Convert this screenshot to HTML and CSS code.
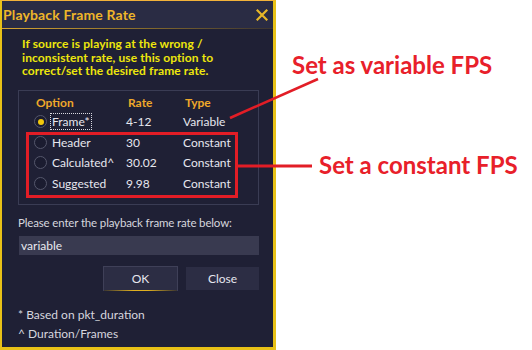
FILE: index.html
```html
<!DOCTYPE html>
<html>
<head>
<meta charset="utf-8">
<link rel="stylesheet" href="styles.css">
</head>
<body>
<div class="page">
  <div class="dialog">
    <div class="titlebar">
      <span class="title">Playback Frame Rate</span>
      <svg class="close" width="12" height="12" viewBox="0 0 12 12"><path d="M1.5 1.5 L10.5 10.5 M10.5 1.5 L1.5 10.5" stroke="#e8b828" stroke-width="2.2" stroke-linecap="square"/></svg>
    </div>
    <div class="content">
      <p class="intro">If source is playing at the wrong /<br>inconsistent rate, use this option to<br>correct/set the desired frame rate.</p>
      <div class="group">
        <div class="row head">
          <span class="c-opt">Option</span><span class="c-rate">Rate</span><span class="c-type">Type</span>
        </div>
        <div class="row">
          <span class="c-opt"><span class="radio on"></span><span class="focus">Frame*</span></span><span class="c-rate">4-12</span><span class="c-type">Variable</span>
        </div>
        <div class="row">
          <span class="c-opt"><span class="radio"></span><span>Header</span></span><span class="c-rate">30</span><span class="c-type">Constant</span>
        </div>
        <div class="row">
          <span class="c-opt"><span class="radio"></span><span>Calculated^</span></span><span class="c-rate">30.02</span><span class="c-type">Constant</span>
        </div>
        <div class="row">
          <span class="c-opt"><span class="radio"></span><span>Suggested</span></span><span class="c-rate">9.98</span><span class="c-type">Constant</span>
        </div>
      </div>
      <div class="prompt">Please enter the playback frame rate below:</div>
      <div class="input">variable</div>
      <div class="buttons">
        <div class="btn ok">OK</div>
        <div class="btn">Close</div>
      </div>
      <div class="note">* Based on pkt_duration</div>
      <div class="note">^ Duration/Frames</div>
    </div>
  </div>
  <svg class="marks" width="532" height="350" viewBox="0 0 532 350">
    <rect x="27.5" y="133.5" width="209" height="63" fill="none" stroke="#e21d26" stroke-width="3"/>
    <line x1="238" y1="166" x2="312" y2="166" stroke="#e21d26" stroke-width="3"/>
    <line x1="230" y1="118" x2="318" y2="79" stroke="#e21d26" stroke-width="2.5"/>
  </svg>
  <div class="callout c1">Set as variable FPS</div>
  <div class="callout c2">Set a constant FPS</div>
</div>
</body>
</html>
```
FILE: styles.css
```css
html, body {
  margin: 0;
  padding: 0;
  background: #ffffff;
}
.page {
  position: relative;
  width: 532px;
  height: 350px;
  font-family: "Lato", "Noto Sans", sans-serif;
}
.dialog {
  width: 276px;
  height: 350px;
  box-sizing: border-box;
  background: #1f2035;
  border-left: 2px solid #e8c117;
  border-right: 3px solid #e8c117;
  border-bottom: 3px solid #e8c117;
  border-top: 1px solid #f2b23a;
  display: flex;
  flex-direction: column;
}
.titlebar {
  height: 27px;
  flex: none;
  background: #2a2c44;
  display: flex;
  align-items: center;
  justify-content: space-between;
  padding: 0 5px 0 1px;
  position: relative;
  border-bottom: 1px solid #1a1b2c;
}
.titlebar::after {
  content: "";
  position: absolute;
  left: 0;
  right: 0;
  bottom: -1px;
  height: 1px;
  background: linear-gradient(to right, #d8a632, #8a6e2c 50%, #3a3432);
}
.title {
  color: #eeb62a;
  font-weight: 700;
  font-size: 14px;
  letter-spacing: 0.15px;
}
.close {
  margin-top: 1px;
}
.content {
  padding: 8px 14px 0 16px;
  display: flex;
  flex-direction: column;
}
.intro {
  margin: 0 0 0 4px;
  color: #eee70c;
  font-weight: 700;
  font-size: 12px;
  letter-spacing: 0.1px;
  line-height: 13.5px;
}
.group {
  margin-top: 12px;
  border: 1px solid #3a3c54;
  height: 115px;
  box-sizing: border-box;
  padding: 3px 0 0 15px;
}
.row {
  display: flex;
  align-items: center;
  height: 20.5px;
  color: #e6e6ee;
  font-size: 12px;
}
.row.head {
  height: 18px;
  color: #eea82a;
  font-weight: 700;
  font-size: 12px;
}
.c-opt {
  width: 92px;
  display: flex;
  align-items: center;
  gap: 5px;
}
.row.head .c-opt { padding-left: 2px; }
.c-rate { width: 56px; }
.c-type { margin-left: 1px; }
.radio {
  width: 11px;
  height: 11px;
  border-radius: 50%;
  border: 1px solid #55576c;
  background: #1b1c30;
  display: inline-flex;
  align-items: center;
  justify-content: center;
  flex: none;
}
.radio.on::after {
  content: "";
  width: 6px;
  height: 6px;
  border-radius: 50%;
  background: #f2c80c;
}
.focus {
  outline: 1px dotted #d8d8e0;
  outline-offset: 0;
  padding: 0 1px;
  margin-left: -1px;
}
.prompt {
  margin-top: 10px;
  color: #d6d6de;
  font-size: 11.5px;
  letter-spacing: -0.15px;
  line-height: 16px;
}
.input {
  margin-top: 5px;
  margin-left: 1px;
  height: 19px;
  line-height: 19px;
  background: #393a50;
  color: #e8e8ee;
  font-size: 12px;
  padding-left: 2px;
}
.buttons {
  margin-top: 12px;
  display: flex;
  justify-content: flex-end;
  gap: 8px;
}
.btn {
  width: 73px;
  height: 23px;
  box-sizing: border-box;
  background: #2c2d44;
  color: #e6e6ee;
  font-size: 12px;
  display: flex;
  align-items: center;
  justify-content: center;
}
.btn.ok {
  width: 75px;
  height: 25px;
  margin-top: -1px;
  border: 1px solid #3f4058;
  position: relative;
}
.btn.ok::after {
  content: "";
  position: absolute;
  left: 0;
  right: 0;
  bottom: -1px;
  height: 1px;
  background: linear-gradient(to right, #3a3530, #e0b020 40%, #e0b020 60%, #3a3530);
}
.note {
  color: #d6d6de;
  font-size: 12px;
  line-height: 19.5px;
}
.buttons + .note {
  margin-top: 14px;
}
.marks {
  position: absolute;
  left: 0;
  top: 0;
}
.callout {
  position: absolute;
  color: #e8202a;
  font-family: "Lato", "Open Sans", sans-serif;
  font-weight: 700;
  font-size: 24px;
  line-height: 26px;
  white-space: nowrap;
}
.c1 { left: 292px; top: 52px; }
.c2 { left: 319px; top: 152px; }
```
